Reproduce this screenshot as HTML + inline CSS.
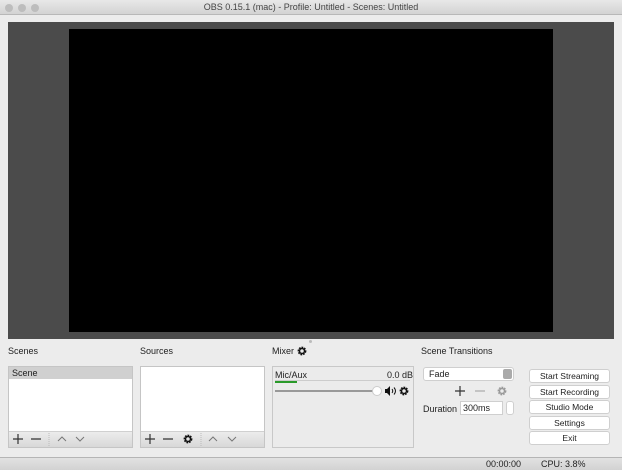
<!DOCTYPE html>
<html><head><style>
*{margin:0;padding:0;box-sizing:border-box}
body{width:622px;height:470px;background:#ececec;font-family:"Liberation Sans",sans-serif;font-size:9px;color:#222;position:relative;overflow:hidden}
.a{position:absolute}
.title{left:0;top:0;width:622px;height:15px;background:linear-gradient(#e8e8e8,#d3d3d3);border-bottom:1px solid #b8b8b8;text-align:center;font-size:9px;line-height:15px;color:#444}
.dot{width:8px;height:8px;border-radius:50%;background:#bdbdbd;top:4px}
.lbl{font-size:9px;color:#222}
.box{background:#fff;border:1px solid #c5c5c5}
.tb{background:linear-gradient(#ececec,#d8d8d8);border-top:1px solid #d0d0d0}
.btn{left:529px;width:81px;height:14px;background:#fff;border:1px solid #cfcfcf;border-radius:3px;text-align:center;line-height:12px;font-size:8.5px;color:#222}
</style></head><body>
<svg width="0" height="0" style="position:absolute"><defs>
<g id="gear"><circle cx="5" cy="5" r="3.3" fill="none" stroke-width="2.2" stroke-dasharray="1.6 0.9"/><circle cx="5" cy="5" r="2.5" fill="none" stroke-width="1.5"/></g>
</defs></svg>
<div class="a title">OBS 0.15.1 (mac) - Profile: Untitled - Scenes: Untitled</div>
<div class="a dot" style="left:5px"></div><div class="a dot" style="left:18px"></div><div class="a dot" style="left:31px"></div>
<div class="a" style="left:8px;top:22px;width:606px;height:317px;background:#4b4b4b"></div>
<div class="a" style="left:69px;top:29px;width:484px;height:303px;background:#000"></div>
<div class="a" style="left:309px;top:340px;width:3px;height:3px;border-radius:50%;background:#bbb"></div>

<div class="a lbl" style="left:8px;top:346px">Scenes</div>
<div class="a lbl" style="left:140px;top:346px">Sources</div>
<div class="a lbl" style="left:272px;top:346px">Mixer</div>
<svg class="a" style="left:297px;top:346px" width="10" height="10" stroke="#111"><use href="#gear"/></svg>
<div class="a lbl" style="left:421px;top:346px">Scene Transitions</div>

<div class="a box" style="left:8px;top:366px;width:125px;height:82px"></div>
<div class="a" style="left:9px;top:367px;width:123px;height:12px;background:#d0d0d0;padding-left:3px;line-height:12px">Scene</div>
<div class="a tb" style="left:9px;top:431px;width:123px;height:16px"></div>
<svg class="a" style="left:9px;top:431px" width="123" height="16" stroke="#333" fill="none" stroke-width="1.2">
<path d="M4 8h10M9 3v10M22 8h10"/><path d="M40 2v13" stroke="#bbb" stroke-dasharray="1 1" stroke-width="1"/>
<path d="M49 10l4-4 4 4M67 6l4 4 4-4" stroke="#777" stroke-width="1"/></svg>

<div class="a box" style="left:140px;top:366px;width:125px;height:82px"></div>
<div class="a tb" style="left:141px;top:431px;width:123px;height:16px"></div>
<svg class="a" style="left:141px;top:431px" width="123" height="16" stroke="#333" fill="none" stroke-width="1.2">
<path d="M4 8h10M9 3v10M22 8h10"/><path d="M60 2v13" stroke="#bbb" stroke-dasharray="1 1" stroke-width="1"/>
<path d="M68 10l4-4 4 4M87 6l4 4 4-4" stroke="#777" stroke-width="1"/></svg>
<svg class="a" style="left:183px;top:434px" width="10" height="10" stroke="#111"><use href="#gear"/></svg>

<div class="a" style="left:272px;top:366px;width:142px;height:82px;border:1px solid #c8c8c8;background:#ebebeb"></div>
<div class="a lbl" style="left:275px;top:370px">Mic/Aux</div>
<div class="a lbl" style="left:387px;top:370px">0.0 dB</div>
<div class="a" style="left:275px;top:380px;width:135px;height:1px;background:#ccc"></div>
<div class="a" style="left:275px;top:381px;width:22px;height:2px;background:#2a9a2a"></div>
<div class="a" style="left:275px;top:390px;width:103px;height:2px;background:#999"></div>
<div class="a" style="left:372px;top:386px;width:10px;height:10px;border-radius:50%;background:#fff;border:1px solid #ccc"></div>
<svg class="a" style="left:385px;top:386px" width="12" height="10"><path d="M0 3h2l3-3v10l-3-3H0z" fill="#111"/><path d="M7 3q1.5 2 0 4M9 1.5q3 3.5 0 7" stroke="#111" fill="none" stroke-width="1"/></svg>
<svg class="a" style="left:399px;top:386px" width="10" height="10" stroke="#111"><use href="#gear"/></svg>

<div class="a" style="left:423px;top:367px;width:91px;height:14px;background:#fff;border:1px solid #cfcfcf;border-radius:3px;padding-left:5px;line-height:12px">Fade</div>
<div class="a" style="left:503px;top:369px;width:9px;height:10px;background:#aaa;border-radius:2px"></div>
<svg class="a" style="left:453px;top:385px" width="40" height="12" fill="none" stroke-width="1.2"><path d="M2 6h10M7 1v10" stroke="#333"/><path d="M22 6h10" stroke="#aaa"/></svg>
<svg class="a" style="left:497px;top:386px" width="10" height="10" stroke="#999"><use href="#gear"/></svg>
<div class="a lbl" style="left:423px;top:404px">Duration</div>
<div class="a" style="left:460px;top:401px;width:43px;height:14px;background:#fff;border:1px solid #cfcfcf;padding-left:2px;line-height:12px">300ms</div>
<div class="a" style="left:506px;top:401px;width:8px;height:14px;background:#fff;border:1px solid #cfcfcf;border-radius:3px"></div>

<div class="a btn" style="top:369px">Start Streaming</div>
<div class="a btn" style="top:385px">Start Recording</div>
<div class="a btn" style="top:400px">Studio Mode</div>
<div class="a btn" style="top:416px">Settings</div>
<div class="a btn" style="top:431px">Exit</div>

<div class="a" style="left:0;top:457px;width:622px;height:13px;background:linear-gradient(#e2e2e2,#d2d2d2);border-top:1px solid #b5b5b5"></div>
<div class="a lbl" style="left:486px;top:459px">00:00:00</div>
<div class="a lbl" style="left:541px;top:459px">CPU: 3.8%</div>
</body></html>
